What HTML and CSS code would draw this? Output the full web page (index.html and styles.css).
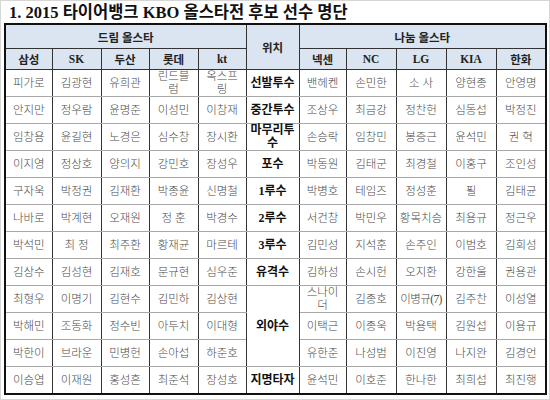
FILE: index.html
```html
<!DOCTYPE html>
<html lang="ko">
<head>
<meta charset="utf-8">
<link rel="stylesheet" href="styles.css">
</head>
<body>
<div class="frame">
  <h1 class="title">1. 2015 타이어뱅크 KBO 올스타전 후보 선수 명단</h1>
  <table class="roster">
    <colgroup>
      <col class="c47"><col class="c49"><col class="c48"><col class="c49"><col class="c48">
      <col class="c53">
      <col class="c47"><col class="c50"><col class="c50"><col class="c50"><col class="c50">
    </colgroup>
    <thead>
      <tr class="h1">
        <th colspan="5">드림 올스타</th>
        <th rowspan="2">위치</th>
        <th colspan="5">나눔 올스타</th>
      </tr>
      <tr class="h2">
        <th>삼성</th><th>SK</th><th>두산</th><th>롯데</th><th>kt</th>
        <th>넥센</th><th>NC</th><th>LG</th><th>KIA</th><th>한화</th>
      </tr>
    </thead>
    <tbody>
      <tr><td>피가로</td><td>김광현</td><td>유희관</td><td>린드블<br>럼</td><td>옥스프<br>링</td><td class="pos">선발투수</td><td>밴헤켄</td><td>손민한</td><td>소 사</td><td>양현종</td><td>안영명</td></tr>
      <tr><td>안지만</td><td>정우람</td><td>윤명준</td><td>이성민</td><td>이창재</td><td class="pos">중간투수</td><td>조상우</td><td>최금강</td><td>정찬헌</td><td>심동섭</td><td>박정진</td></tr>
      <tr><td>임창용</td><td>윤길현</td><td>노경은</td><td>심수창</td><td>장시환</td><td class="pos">마무리투<br>수</td><td>손승락</td><td>임창민</td><td>봉중근</td><td>윤석민</td><td>권 혁</td></tr>
      <tr><td>이지영</td><td>정상호</td><td>양의지</td><td>강민호</td><td>장성우</td><td class="pos">포수</td><td>박동원</td><td>김태군</td><td>최경철</td><td>이홍구</td><td>조인성</td></tr>
      <tr><td>구자욱</td><td>박정권</td><td>김재환</td><td>박종윤</td><td>신명철</td><td class="pos">1루수</td><td>박병호</td><td>테임즈</td><td>정성훈</td><td>필</td><td>김태균</td></tr>
      <tr><td>나바로</td><td>박계현</td><td>오재원</td><td>정 훈</td><td>박경수</td><td class="pos">2루수</td><td>서건창</td><td>박민우</td><td>황목치승</td><td>최용규</td><td>정근우</td></tr>
      <tr><td>박석민</td><td>최 정</td><td>최주환</td><td>황재균</td><td>마르테</td><td class="pos">3루수</td><td>김민성</td><td>지석훈</td><td>손주인</td><td>이범호</td><td>김회성</td></tr>
      <tr><td>김상수</td><td>김성현</td><td>김재호</td><td>문규현</td><td>심우준</td><td class="pos">유격수</td><td>김하성</td><td>손시헌</td><td>오지환</td><td>강한울</td><td>권용관</td></tr>
      <tr><td>최형우</td><td>이명기</td><td>김현수</td><td>김민하</td><td>김상현</td><td class="pos" rowspan="3">외야수</td><td>스나이<br>더</td><td>김종호</td><td class="tight">이병규(7)</td><td>김주찬</td><td>이성열</td></tr>
      <tr><td>박해민</td><td>조동화</td><td>정수빈</td><td>아두치</td><td>이대형</td><td>이택근</td><td>이종욱</td><td>박용택</td><td>김원섭</td><td>이용규</td></tr>
      <tr><td>박한이</td><td>브라운</td><td>민병헌</td><td>손아섭</td><td>하준호</td><td>유한준</td><td>나성범</td><td>이진영</td><td>나지완</td><td>김경언</td></tr>
      <tr><td>이승엽</td><td>이재원</td><td>홍성흔</td><td>최준석</td><td>장성호</td><td class="pos">지명타자</td><td>윤석민</td><td>이호준</td><td>한나한</td><td>최희섭</td><td>최진행</td></tr>
    </tbody>
  </table>
</div>
</body>
</html>
```

FILE: styles.css
```css
html, body {
  margin: 0;
  padding: 0;
  background: #ffffff;
}

.frame {
  box-sizing: border-box;
  width: 550px;
  height: 400px;
  border: 1px solid #d6d6d6;
  padding: 0 0 0 3px;
  font-family: "Liberation Serif", "Noto Sans CJK KR", serif;
}

.title {
  margin: 0;
  padding: 3px 0 0 5px;
  height: 19px;
  font-size: 16.5px;
  line-height: 18px;
  font-weight: bold;
  color: #111;
}

.roster {
  border-collapse: collapse;
  table-layout: fixed;
  width: 541px;
  border: 2px solid #111;
}

.c47 { width: 47px; }
.c48 { width: 48px; }
.c49 { width: 49px; }
.c50 { width: 50px; }
.c53 { width: 53px; }

.roster th {
  background: #dbe5f1;
  border: 1px solid #333;
  font-size: 11.5px;
  font-weight: bold;
  color: #222;
  padding: 0;
  text-align: center;
}

.roster .h1 th { height: 23px; }
.roster .h2 th { height: 20px; }

.roster td {
  height: 26px;
  padding: 0;
  text-align: center;
  vertical-align: middle;
  font-size: 11.5px;
  line-height: 13px;
  font-weight: 300;
  color: #4d4d4d;
  border-left: 1px solid #333;
  border-right: 1px solid #333;
  border-top: 1px solid #a8a8a8;
  border-bottom: 1px solid #a8a8a8;
}

.roster td.pos {
  font-weight: bold;
  color: #111;
  font-size: 12px;
}

.roster td.tight {
  letter-spacing: -0.6px;
}
```
